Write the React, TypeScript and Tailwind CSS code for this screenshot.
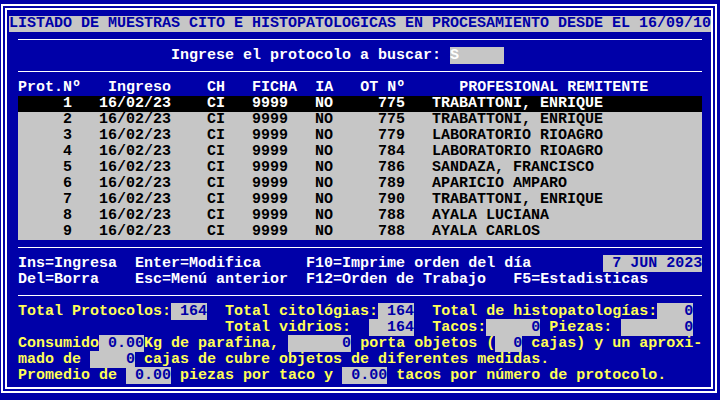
import React from 'react';

type Kind = 'w' | 'y' | 'box' | 'inv';

interface Item {
  col: number;
  text: string;
  kind: Kind;
}

const kindClass: Record<Kind, string> = {
  w: 'text-white',
  y: 'text-[#ffff55]',
  box: 'bg-[#c6c6c6] text-[#0000a8]',
  inv: 'bg-[#c6c6c6] text-white',
};

// una línea de pantalla de texto: cada item va en su columna (col 1 = borde izquierdo del área)
const ScreenLine = ({ items }: { items: Item[] }) => {
  let pos = 1;
  const parts: React.ReactNode[] = [];
  items.forEach((it, i) => {
    if (it.col > pos) {
      parts.push(<span key={`s${i}`}>{' '.repeat(it.col - pos)}</span>);
    }
    parts.push(
      <span key={`t${i}`} className={kindClass[it.kind]}>
        {it.text}
      </span>,
    );
    pos = it.col + it.text.length;
  });
  return <div className="h-[16px] leading-[16px] whitespace-pre">{parts}</div>;
};

const Rule = () => (
  <div className="h-[16px] pt-[7px] pl-[9px]">
    <div className="w-[684px] h-px bg-white" />
  </div>
);

const rows = [
  { n: 1, ot: 775, name: 'TRABATTONI, ENRIQUE' },
  { n: 2, ot: 775, name: 'TRABATTONI, ENRIQUE' },
  { n: 3, ot: 779, name: 'LABORATORIO RIOAGRO' },
  { n: 4, ot: 784, name: 'LABORATORIO RIOAGRO' },
  { n: 5, ot: 786, name: 'SANDAZA, FRANCISCO' },
  { n: 6, ot: 789, name: 'APARICIO AMPARO' },
  { n: 7, ot: 790, name: 'TRABATTONI, ENRIQUE' },
  { n: 8, ot: 788, name: 'AYALA LUCIANA' },
  { n: 9, ot: 788, name: 'AYALA CARLOS' },
];

export default function App() {
  return (
    <div className="w-[720px] h-[400px] bg-[#0000a8] pl-px pt-[4px] font-['Liberation_Mono',monospace] font-bold text-[15px] text-white">
      <div className="w-[716px] h-[389px] border-2 border-white p-[2px]">
        <div className="h-full border-2 border-white pl-[2px] pt-[6px]">
          {/* Título */}
          <div className="w-[702px] h-[16px] leading-[16px] bg-[#c6c6c6] text-[#0000a8] whitespace-pre">
            LISTADO DE MUESTRAS CITO E HISTOPATOLOGICAS EN PROCESAMIENTO DESDE EL 16/09/10
          </div>
          <Rule />
          <ScreenLine
            items={[
              { col: 19, text: 'Ingrese el protocolo a buscar: ', kind: 'w' },
              { col: 50, text: 'S     ', kind: 'inv' },
            ]}
          />
          <Rule />
          <ScreenLine
            items={[
              { col: 2, text: 'Prot.Nº', kind: 'w' },
              { col: 12, text: 'Ingreso', kind: 'w' },
              { col: 23, text: 'CH', kind: 'w' },
              { col: 28, text: 'FICHA', kind: 'w' },
              { col: 35, text: 'IA', kind: 'w' },
              { col: 40, text: 'OT Nº', kind: 'w' },
              { col: 51, text: 'PROFESIONAL REMITENTE', kind: 'w' },
            ]}
          />

          {/* Tabla de protocolos */}
          <div className="ml-[9px] w-[684px] bg-[#c6c6c6] text-black">
            {rows.map((r, i) => (
              <div
                key={r.n}
                className={`h-[16px] leading-[16px] whitespace-pre ${i === 0 ? 'bg-black text-white' : ''}`}
              >
                {`${String(r.n).padStart(6, ' ')}   16/02/23    CI   9999   NO     ${r.ot}   ${r.name}`}
              </div>
            ))}
          </div>

          <Rule />
          <ScreenLine
            items={[
              { col: 2, text: 'Ins=Ingresa', kind: 'w' },
              { col: 15, text: 'Enter=Modifica', kind: 'w' },
              { col: 34, text: 'F10=Imprime orden del día', kind: 'w' },
              { col: 67, text: ' 7 JUN 2023', kind: 'box' },
            ]}
          />
          <ScreenLine
            items={[
              { col: 2, text: 'Del=Borra', kind: 'w' },
              { col: 15, text: 'Esc=Menú anterior', kind: 'w' },
              { col: 34, text: 'F12=Orden de Trabajo', kind: 'w' },
              { col: 57, text: 'F5=Estadisticas', kind: 'w' },
            ]}
          />
          <Rule />

          {/* Totales */}
          <ScreenLine
            items={[
              { col: 2, text: 'Total Protocolos:', kind: 'y' },
              { col: 19, text: ' 164', kind: 'box' },
              { col: 25, text: 'Total citológias:', kind: 'y' },
              { col: 42, text: ' 164', kind: 'box' },
              { col: 48, text: 'Total de histopatologías:', kind: 'y' },
              { col: 73, text: '   0', kind: 'box' },
            ]}
          />
          <ScreenLine
            items={[
              { col: 25, text: 'Total vidrios:', kind: 'y' },
              { col: 41, text: '  164', kind: 'box' },
              { col: 48, text: 'Tacos:', kind: 'y' },
              { col: 54, text: '     0', kind: 'box' },
              { col: 61, text: 'Piezas:', kind: 'y' },
              { col: 69, text: '       0', kind: 'box' },
            ]}
          />
          <ScreenLine
            items={[
              { col: 2, text: 'Consumido', kind: 'y' },
              { col: 11, text: ' 0.00', kind: 'box' },
              { col: 16, text: 'Kg de parafina,', kind: 'y' },
              { col: 32, text: '      0', kind: 'box' },
              { col: 40, text: 'porta objetos (', kind: 'y' },
              { col: 55, text: '  0', kind: 'box' },
              { col: 59, text: 'cajas) y un aproxi-', kind: 'y' },
            ]}
          />
          <ScreenLine
            items={[
              { col: 2, text: 'mado de', kind: 'y' },
              { col: 10, text: '    0', kind: 'box' },
              { col: 16, text: 'cajas de cubre objetos de diferentes medidas.', kind: 'y' },
            ]}
          />
          <ScreenLine
            items={[
              { col: 2, text: 'Promedio de', kind: 'y' },
              { col: 14, text: ' 0.00', kind: 'box' },
              { col: 20, text: 'piezas por taco y', kind: 'y' },
              { col: 38, text: ' 0.00', kind: 'box' },
              { col: 44, text: 'tacos por número de protocolo.', kind: 'y' },
            ]}
          />
        </div>
      </div>
    </div>
  );
}
